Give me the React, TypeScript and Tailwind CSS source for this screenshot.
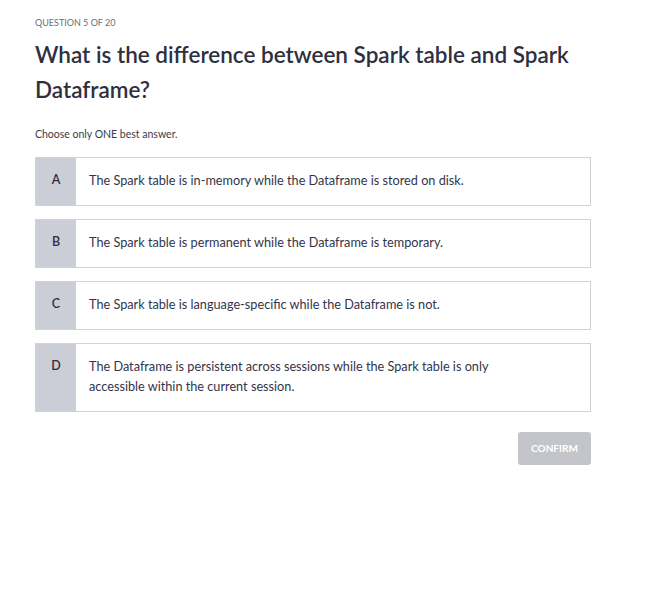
const options = [
  { letter: "A", text: "The Spark table is in-memory while the Dataframe is stored on disk." },
  { letter: "B", text: "The Spark table is permanent while the Dataframe is temporary." },
  { letter: "C", text: "The Spark table is language-specific while the Dataframe is not." },
  {
    letter: "D",
    text: "The Dataframe is persistent across sessions while the Spark table is only accessible within the current session.",
  },
];

const App = () => {
  return (
    <main className="min-h-screen bg-white font-['Lato',sans-serif] text-[#2d2f3b]">
      <div className="w-[556px] ml-[35px] pt-[16px]">
        <p className="text-[9px] leading-[14px] text-[#6b6d78] uppercase">Question 5 of 20</p>
        <h1 className="mt-[7px] text-[22.5px] leading-[35px] font-semibold text-[#2e3040]">
          What is the difference between Spark table and Spark Dataframe?
        </h1>
        <p className="mt-[19px] text-[10.5px] leading-[16px] text-[#3a3c48]">Choose only ONE best answer.</p>

        <div className="mt-[15px] flex flex-col gap-[13px]">
          {options.map((o) => (
            <button
              key={o.letter}
              className="flex w-full text-left border border-[#d1d2d9] bg-white"
            >
              <div className="w-[40px] shrink-0 bg-[#cbcdd7] pt-[12px] pb-[15px] text-center text-[12.5px] leading-[20px] font-semibold text-[#2e3040]">
                {o.letter}
              </div>
              <div className="flex-1 pl-[13px] pr-[90px] pt-[12px] pb-[15px] text-[12.7px] leading-[20px] text-[#33354a]">
                {o.text}
              </div>
            </button>
          ))}
        </div>

        <div className="mt-[20px] flex justify-end">
          <button className="w-[73px] h-[33px] rounded-[3px] bg-[#c4c5cb] text-white text-[10px] font-bold uppercase">
            Confirm
          </button>
        </div>
      </div>
    </main>
  );
};

export default App;
